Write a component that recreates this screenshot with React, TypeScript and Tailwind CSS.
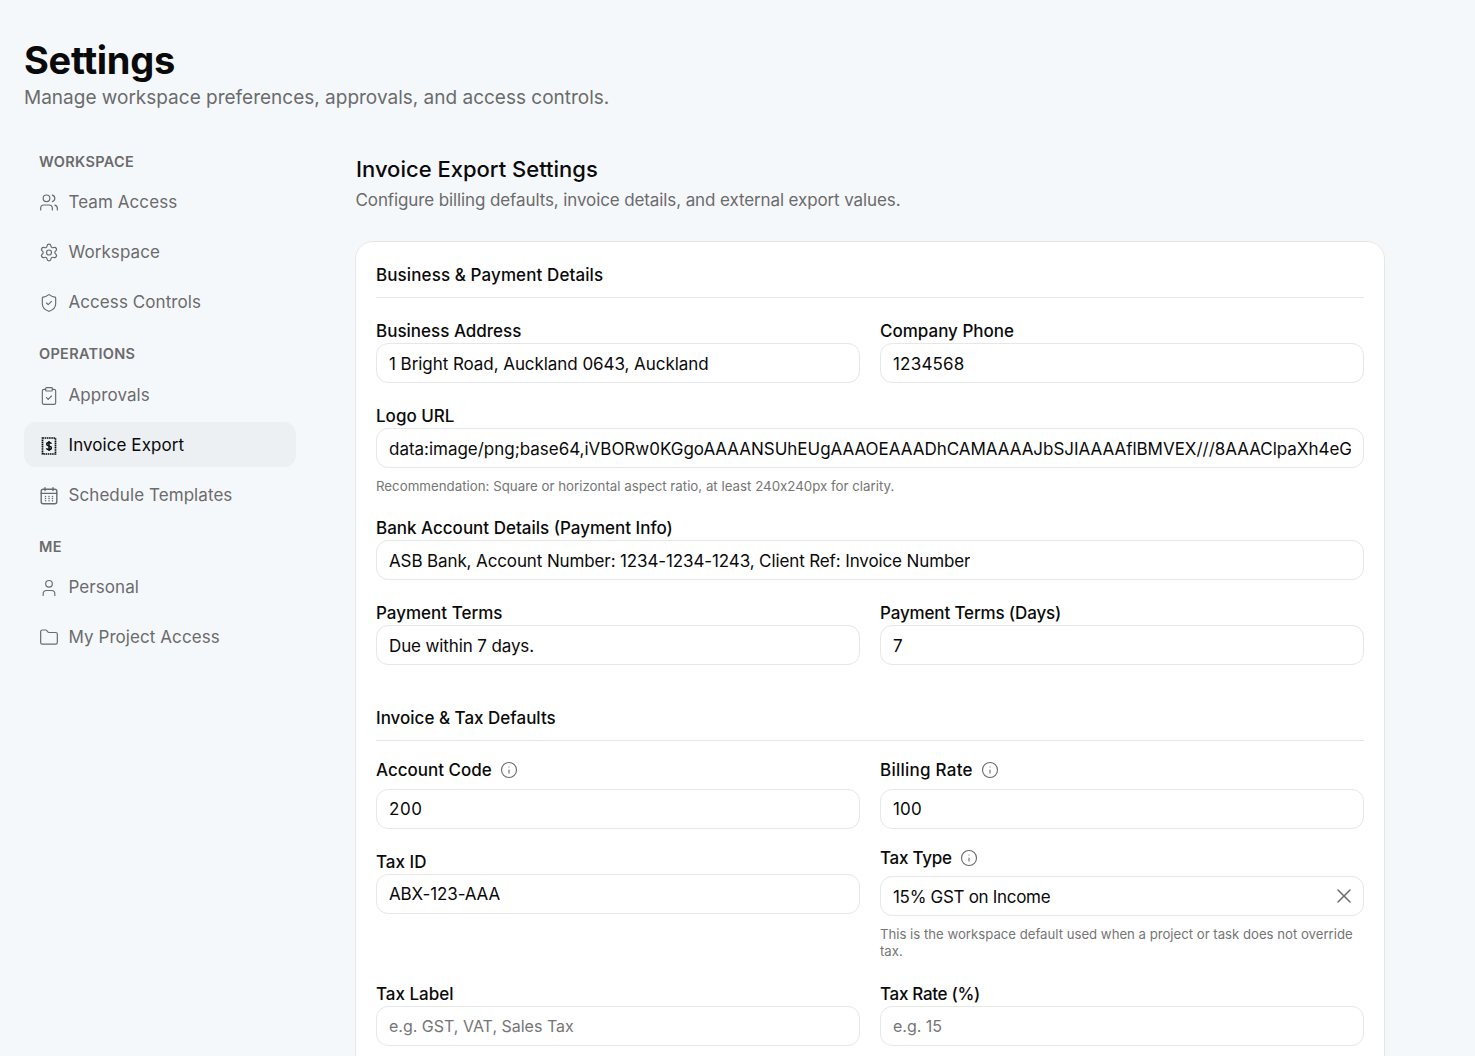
import React from "react";
import { Users, Settings, ShieldCheck, ClipboardCheck, User, Folder, Info, X } from "lucide-react";

const FONT = "font-['Inter',sans-serif]";

function InvoiceIcon() {
  return (
    <svg width="18" height="18" viewBox="0 0 18 18" fill="none" stroke="#0a0a0a" strokeWidth="1.7">
      <path d="M2.5 1h13v16h-13z" strokeDasharray="1.6 0.6" />
      <path d="M11.4 6.8c-.3-.8-1.2-1.3-2.4-1.3-1.4 0-2.3.7-2.3 1.7 0 2.4 4.7 1.1 4.7 3.6 0 1.1-1 1.8-2.4 1.8-1.2 0-2.2-.5-2.5-1.4M9 4v10" strokeWidth="1.5" />
    </svg>
  );
}

function CalendarIcon() {
  return (
    <svg width="20" height="20" viewBox="0 0 20 20" fill="none" stroke="currentColor" strokeWidth="1.4" strokeLinecap="round">
      <rect x="2.2" y="3.2" width="15.6" height="14.6" rx="2" />
      <path d="M2.2 7.4h15.6M6 1.6v3M14 1.6v3" />
      <path d="M6.5 10.4h.01M10 10.4h.01M13.5 10.4h.01M6.5 12.6h.01M10 12.6h.01M13.5 12.6h.01M6.5 14.8h.01M10 14.8h.01M13.5 14.8h.01" strokeWidth="1.5" />
    </svg>
  );
}

function NavItem({ icon, label, active, lower }: { icon: React.ReactNode; label: string; active?: boolean; lower?: boolean }) {
  return (
    <div className={`flex h-[45px] items-center gap-[9.5px] rounded-xl px-[15px] text-[17px] tracking-[0.07px] ${lower ? "pt-[2px]" : ""} ${active ? "bg-[#edf0f3] text-[#0a0a0a]" : "text-[#6b6b6b]"}`}>
      <span className="flex w-[20px] justify-center text-[#6b6b6b]">{icon}</span>
      <span>{label}</span>
    </div>
  );
}

function NavGroup({ title, children }: { title: string; children: React.ReactNode }) {
  return (
    <div>
      <div className="px-[15px] text-[14.5px] font-semibold leading-[20px] tracking-[0.3px] text-[#6b6b6b]">{title}</div>
      <div className="mt-[8px] flex flex-col gap-[5px]">{children}</div>
    </div>
  );
}

function Field({ label, value, placeholder, info, trailing, className, labelClass, valueClass }: { label: string; value?: string; placeholder?: string; info?: boolean; trailing?: React.ReactNode; className?: string; labelClass?: string; valueClass?: string }) {
  return (
    <div className={className}>
      <div className={`flex items-center gap-[8px] text-[17px] font-medium leading-[24px] text-[#0a0a0a] ${labelClass ?? ""}`}>
        <span>{label}</span>
        {info && <Info size={18} className="text-[#6b6b6b]" strokeWidth={1.5} />}
      </div>
      <div className="flex h-[40px] items-center justify-between rounded-xl border border-[#e6e7e9] bg-white px-[12px] text-[17px]">
        {value ? <span className={`overflow-hidden whitespace-nowrap text-[#0a0a0a] ${valueClass ?? "pt-[2px] tracking-[-0.12px]"}`}>{value}</span> : <span className="text-[16px] text-[#757575]">{placeholder}</span>}
        {trailing}
      </div>
    </div>
  );
}

function SectionTitle({ children, className }: { children: React.ReactNode; className?: string }) {
  return <div className={`border-b border-[#e6e7e9] pb-[10px] text-[17px] font-medium leading-[24px] text-[#0a0a0a] ${className ?? "tracking-[0.1px]"}`}>{children}</div>;
}

export default function App() {
  return (
    <div className={`${FONT} h-[1056px] overflow-hidden bg-[#f5f8fb] px-[24px] pt-[38px]`}>
      <h1 className="text-[38px] font-bold leading-[44px] tracking-[-0.3px] text-[#0a0a0a]">Settings</h1>
      <p className="pt-[1px] text-[19px] leading-[30px] text-[#6b6b6b]">Manage workspace preferences, approvals, and access controls.</p>

      <div className="mt-[29px] flex">
        <aside className="w-[272px] shrink-0 pt-[10px]">
          <div className="flex flex-col gap-[19px]">
            <NavGroup title="WORKSPACE">
              <NavItem icon={<Users size={21} strokeWidth={1.45} />} label="Team Access" />
              <NavItem icon={<Settings size={21} strokeWidth={1.45} />} label="Workspace" />
              <NavItem icon={<ShieldCheck size={22} strokeWidth={1.4} />} label="Access Controls" />
            </NavGroup>
            <NavGroup title="OPERATIONS">
              <NavItem lower icon={<ClipboardCheck size={22} strokeWidth={1.4} />} label="Approvals" />
              <NavItem lower active icon={<InvoiceIcon />} label="Invoice Export" />
              <NavItem lower icon={<CalendarIcon />} label="Schedule Templates" />
            </NavGroup>
            <div className="pt-[1px]">
              <NavGroup title="ME">
                <NavItem icon={<User size={22} strokeWidth={1.4} />} label="Personal" />
                <NavItem icon={<Folder size={21} strokeWidth={1.45} />} label="My Project Access" />
              </NavGroup>
            </div>
          </div>
        </aside>

        <main className="ml-[59px] w-[1030px]">
          <h2 className="pl-[1px] pt-[12px] text-[22px] font-medium leading-[30px] text-[#0a0a0a]">Invoice Export Settings</h2>
          <p className="mt-[4px] pl-[0.5px] text-[17px] leading-[24px] tracking-[-0.11px] text-[#6b6b6b]">Configure billing defaults, invoice details, and external export values.</p>

          <div className="mt-[29px] rounded-t-[18px] border border-[#e6e7e9] bg-white px-[20px] pb-[40px] pt-[21px]">
            <SectionTitle>Business &amp; Payment Details</SectionTitle>
            <div className="mt-[21px] grid grid-cols-2 gap-x-[20px]">
              <Field label="Business Address" value="1 Bright Road, Auckland 0643, Auckland" valueClass="pt-[4px] tracking-[-0.06px]" />
              <Field label="Company Phone" value="1234568" valueClass="pt-[4px] tracking-[0.2px]" />
            </div>
            <Field className="mt-[21px]" label="Logo URL" value="data:image/png;base64,iVBORw0KGgoAAAANSUhEUgAAAOEAAADhCAMAAAAJbSJIAAAAflBMVEX///8AAAClpaXh4eGxsbHz8/P29vbFxcXp6enb29vOzs6" valueClass="pt-[4px] tracking-[-0.02px]" />
            <p className="mt-[9px] text-[13.3px] leading-[18px] text-[#757575] [font-feature-settings:'calt'_0]">Recommendation: Square or horizontal aspect ratio, at least 240x240px for clarity.</p>
            <Field className="mt-[21px]" label="Bank Account Details (Payment Info)" value="ASB Bank, Account Number: 1234-1234-1243, Client Ref: Invoice Number" valueClass="pt-[4px] tracking-[-0.12px]" />
            <div className="mt-[21px] grid grid-cols-2 gap-x-[20px]">
              <Field label="Payment Terms" value="Due within 7 days." valueClass="pt-[4px] tracking-[-0.12px]" />
              <Field label="Payment Terms (Days)" labelClass="tracking-[-0.15px]" value="7" valueClass="pt-[4px]" />
            </div>

            <div className="mt-[41px]"><SectionTitle className="tracking-[0px]">Invoice &amp; Tax Defaults</SectionTitle></div>
            <div className="mt-[17px] grid grid-cols-2 gap-x-[20px]">
              <Field label="Account Code" value="200" info labelClass="mb-[7px]" valueClass="pt-[2px] tracking-[0.6px]" />
              <Field label="Billing Rate" value="100" info labelClass="mb-[7px] tracking-[0.25px]" valueClass="pt-[2px] tracking-[0.2px]" />
            </div>
            <div className="mt-[21px] grid grid-cols-2 gap-x-[20px]">
              <Field label="Tax ID" value="ABX-123-AAA" />
              <div className="-mt-[4px]">
                <Field label="Tax Type" value="15% GST on Income" info labelClass="mb-[6px] tracking-[-0.25px]" valueClass="pt-[4px] tracking-[-0.3px]" trailing={<X size={24} className="-mr-[5px] shrink-0 text-[#6b6b6b]" strokeWidth={1.5} />} />
                <p className="mt-[10px] text-[13.2px] leading-[17px] tracking-[-0.01px] text-[#757575]">This is the workspace default used when a project or task does not override tax.</p>
              </div>
            </div>
            <div className="mt-[22px] grid grid-cols-2 gap-x-[20px]">
              <Field label="Tax Label" placeholder="e.g. GST, VAT, Sales Tax" />
              <Field label="Tax Rate (%)" labelClass="tracking-[-0.3px]" placeholder="e.g. 15" />
            </div>
          </div>
        </main>
      </div>
    </div>
  );
}
